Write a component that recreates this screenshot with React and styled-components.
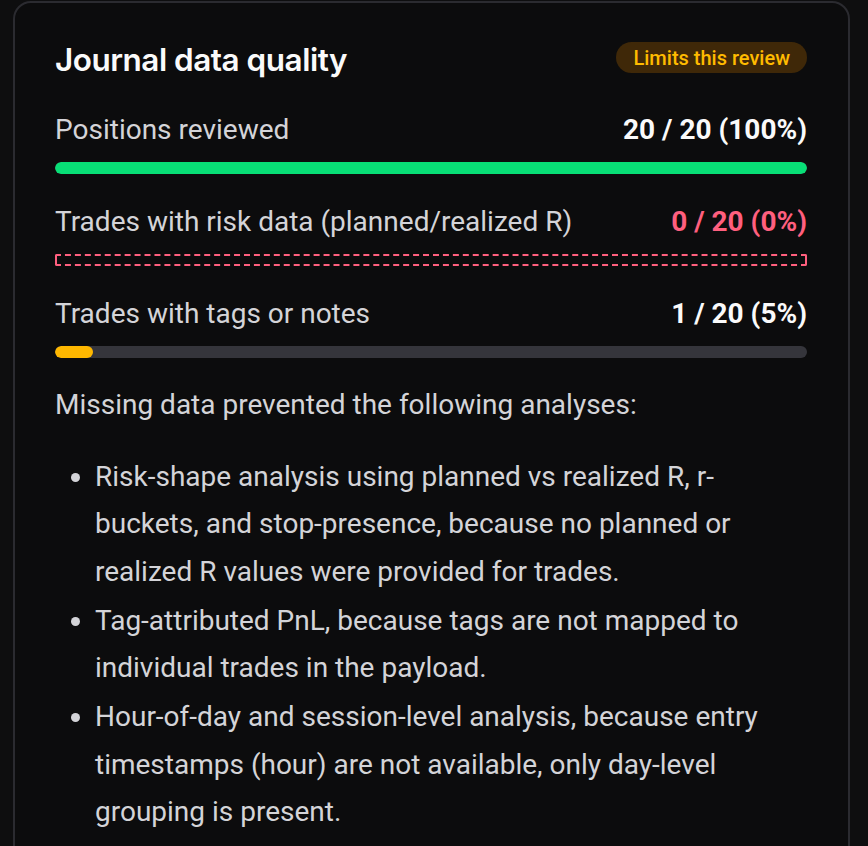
import React from "react";
import styled, { createGlobalStyle } from "styled-components";

const Global = createGlobalStyle`
  html, body { margin: 0; padding: 0; background: #0e0e0f; }
  body { font-family: Roboto, "Liberation Sans", sans-serif; -webkit-font-smoothing: antialiased; }
`;

const Page = styled.div`
  padding: 1px 0 0 13px;
  height: 846px;
  box-sizing: border-box;
  overflow: hidden;
`;

const Card = styled.section`
  width: 837px;
  box-sizing: border-box;
  background: #0c0c0d;
  border: 2px solid #2b2b30;
  border-radius: 18px;
  padding: 37px 41px 80px 40px;
`;

const Header = styled.div`
  display: flex;
  align-items: center;
  justify-content: space-between;
  height: 36px;
  margin-bottom: 36px;
`;

const Title = styled.h2`
  margin: 4px 0 0;
  font-family: Inter, "Noto Sans", sans-serif;
  font-weight: 600;
  font-size: 31.5px;
  letter-spacing: -0.5px;
  line-height: 36px;
  color: #fafafa;
`;

const Badge = styled.span`
  display: inline-flex;
  align-items: center;
  height: 31px;
  padding: 0 17px;
  border-radius: 16px;
  background: #3f2808;
  color: #ffbb00;
  font-size: 20px;
  font-weight: 500;
  margin-top: -1px;
`;

const Metric = styled.div`
  & + & { margin-top: 30px; }
`;

const MetricHead = styled.div`
  display: flex;
  justify-content: space-between;
  align-items: center;
  font-size: 28px;
  line-height: 36px;
  margin-bottom: 14px;
`;

const Label = styled.span`
  color: #d4d4d8;
`;

const Value = styled.span`
  font-weight: 700;
  color: ${(p) => (p.$tone === "bad" ? "#ff5f7e" : "#fafafa")};
`;

const Track = styled.div`
  height: 12px;
  border-radius: 6px;
  background: #35353b;
  overflow: hidden;
`;

const Fill = styled.div`
  height: 100%;
  border-radius: 6px;
  background: ${(p) => p.$color};
`;

const Empty = styled.div`
  height: 12px;
  box-sizing: border-box;
  border: 2px dashed #ff5f7e;
  border-radius: 2px;
`;

const Note = styled.p`
  margin: 23px 0 0;
  font-size: 28px;
  line-height: 47.5px;
  color: #d4d4d8;
`;

const List = styled.ul`
  margin: 24px 0 0;
  padding-left: 40px;
  font-size: 28px;
  line-height: 47.5px;
  color: #d4d4d8;
`;

const Item = styled.li`
  & + & { margin-top: 1.5px; }
`;

const metrics = [
  { label: "Positions reviewed", value: "20 / 20 (100%)", pct: 100, color: "#08df76" },
  { label: "Trades with risk data (planned/realized R)", value: "0 / 20 (0%)", pct: 0, tone: "bad" },
  { label: "Trades with tags or notes", value: "1 / 20 (5%)", pct: 5, color: "#ffb800" },
];

const items = [
  "Risk-shape analysis using planned vs realized R, r-buckets, and stop-presence, because no planned or realized R values were provided for trades.",
  "Tag-attributed PnL, because tags are not mapped to individual trades in the payload.",
  "Hour-of-day and session-level analysis, because entry timestamps (hour) are not available, only day-level grouping is present.",
];

export default function App() {
  return (
    <Page>
      <Global />
      <Card>
        <Header>
          <Title>Journal data quality</Title>
          <Badge>Limits this review</Badge>
        </Header>
        {metrics.map((m) => (
          <Metric key={m.label}>
            <MetricHead>
              <Label>{m.label}</Label>
              <Value $tone={m.tone}>{m.value}</Value>
            </MetricHead>
            {m.pct === 0 ? (
              <Empty />
            ) : (
              <Track>
                <Fill $color={m.color} style={{ width: `${m.pct}%` }} />
              </Track>
            )}
          </Metric>
        ))}
        <Note>Missing data prevented the following analyses:</Note>
        <List>
          {items.map((t) => (
            <Item key={t}>{t}</Item>
          ))}
        </List>
      </Card>
    </Page>
  );
}
